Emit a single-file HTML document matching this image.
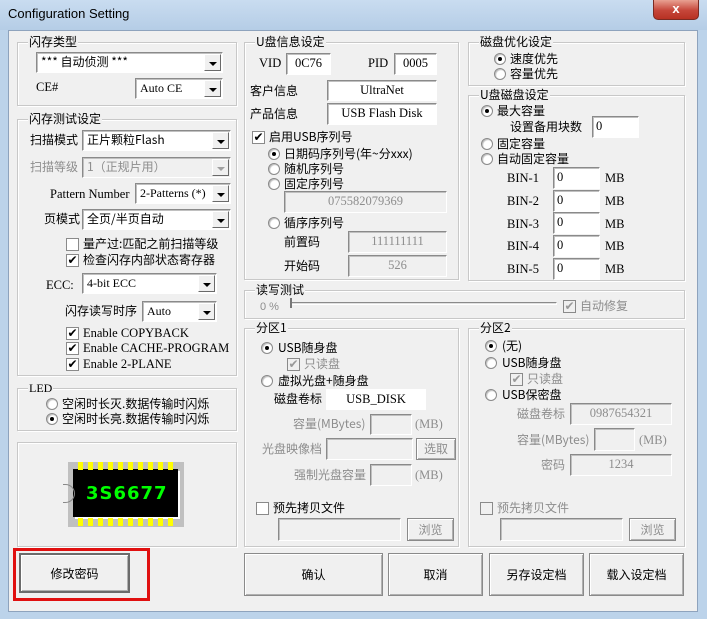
<!DOCTYPE html>
<html><head><meta charset="utf-8">
<style>
*{margin:0;padding:0;box-sizing:border-box}
body{width:707px;height:619px;overflow:hidden;background:#bcd3ea;font-family:"Liberation Serif","Noto Sans CJK SC",serif;font-size:12px;color:#000;position:relative}
div,span{position:absolute}
.t{line-height:16px;white-space:nowrap;font-family:"Liberation Serif","Noto Sans CJK SC",serif;font-size:12.5px}
.c{font-family:"Noto Sans CJK SC","Liberation Sans",sans-serif;font-size:12px}
.g{color:#8d8d8d}
.grp{border:1px solid #c8c8c8;box-shadow:inset 1px 1px 0 #fff,1px 1px 0 #fff}
.lb{background:#f0f0f0;padding:0 1px;line-height:14px;top:-8px;left:10px}
.ed{background:#fff;border:1px solid;border-color:#8a8a8a #fff #fff #8a8a8a;box-shadow:inset 1px 1px 0 #c0c0c0;text-align:center;line-height:18px;font-size:12.5px;font-family:"Liberation Serif",serif}
.dis{background:#f0f0f0;color:#8d8d8d}
.cb{background:#fff;border:1px solid;border-color:#8a8a8a #fff #fff #8a8a8a;box-shadow:inset 1px 1px 0 #c0c0c0;line-height:18px;padding-left:4px;white-space:nowrap}
.ar{right:1px;top:1px;bottom:1px;width:17px;background:#f0f0f0;border:1px solid;border-color:#fff #6a6a6a #6a6a6a #fff}
.ar:after{content:"";position:absolute;left:4px;top:7px;border-left:4px solid transparent;border-right:4px solid transparent;border-top:4px solid #000}
.ard:after{border-top-color:#a0a0a0}
.rb{width:12px;height:12px;border-radius:50%;background:#fff;border:1px solid #8a8a8a;box-shadow:inset 1px 1px 1px #bbb}
.rb.on:after{content:"";position:absolute;left:3px;top:3px;width:4px;height:4px;border-radius:50%;background:#000}
.ck{width:13px;height:13px;background:#fff;border:1px solid #8a8a8a;font-size:12px;line-height:11px;text-align:center;font-family:"DejaVu Sans",sans-serif}
.ckd{background:#f0f0f0;color:#999}
.btn{background:#f0f0f0;border:1px solid #8a8a8a;box-shadow:inset 1px 1px 0 #fff,inset -1px -1px 0 #b0b0b0;text-align:center;font-family:"Noto Sans CJK SC",sans-serif;font-size:12px}
</style></head><body>
<div style="left:0;top:0;width:707px;height:30px;background:linear-gradient(#c9dcf0,#b5cde6)"></div>
<div class="t" style="left:8px;top:6px;font-family:'Liberation Sans',sans-serif;font-size:13px">Configuration Setting</div>
<div style="left:653px;top:0;width:46px;height:20px;background:linear-gradient(#e8a192,#c6463a 55%,#b73123);border:1px solid #7b2a22;border-top:none;border-radius:0 0 5px 5px;color:#fff;text-align:center;font:bold 13px/18px 'Liberation Sans',sans-serif">x</div>
<div style="left:8px;top:30px;width:690px;height:582px;background:#f0f0f0;border:1px solid #8ea3bd"></div>

<div class="grp" style="left:17px;top:42px;width:220px;height:64px"><span class="lb c">闪存类型</span></div>
<div class="cb c" style="left:36px;top:52px;width:187px;height:21px">*** 自动侦测 ***<span class="ar"></span></div>
<div class="t" style="left:36px;top:79px">CE#</div>
<div class="cb" style="left:135px;top:78px;width:88px;height:21px">Auto CE<span class="ar"></span></div>

<div class="grp" style="left:17px;top:119px;width:220px;height:257px"><span class="lb c">闪存测试设定</span></div>
<div class="t c" style="left:30px;top:132px">扫描模式</div>
<div class="cb c" style="left:82px;top:130px;width:149px;height:21px">正片颗粒Flash<span class="ar"></span></div>
<div class="t c g" style="left:30px;top:159px">扫描等级</div>
<div class="cb c g" style="left:82px;top:157px;width:149px;height:21px;background:#f0f0f0">1（正规片用）<span class="ar ard"></span></div>
<div class="t" style="left:50px;top:186px">Pattern Number</div>
<div class="cb" style="left:135px;top:183px;width:96px;height:21px">2-Patterns (*)<span class="ar"></span></div>
<div class="t c" style="left:44px;top:211px">页模式</div>
<div class="cb c" style="left:82px;top:209px;width:149px;height:21px">全页/半页自动<span class="ar"></span></div>
<div class="ck" style="left:66px;top:238px"></div><div class="t c" style="left:83px;top:236px">量产过:匹配之前扫描等级</div>
<div class="ck" style="left:66px;top:254px">✔</div><div class="t c" style="left:83px;top:252px">检查闪存内部状态寄存器</div>
<div class="t" style="left:46px;top:277px">ECC:</div>
<div class="cb" style="left:82px;top:273px;width:135px;height:21px">4-bit ECC<span class="ar"></span></div>
<div class="t c" style="left:65px;top:303px">闪存读写时序</div>
<div class="cb" style="left:142px;top:301px;width:75px;height:21px">Auto<span class="ar"></span></div>
<div class="ck" style="left:66px;top:327px">✔</div><div class="t" style="left:83px;top:325px">Enable COPYBACK</div>
<div class="ck" style="left:66px;top:342px">✔</div><div class="t" style="left:83px;top:340px">Enable CACHE-PROGRAM</div>
<div class="ck" style="left:66px;top:358px">✔</div><div class="t" style="left:83px;top:356px">Enable 2-PLANE</div>

<div class="grp" style="left:17px;top:388px;width:220px;height:43px"><span class="lb">LED</span></div>
<div class="rb" style="left:46px;top:398px"></div><div class="t c" style="left:62px;top:396px">空闲时长灭.数据传输时闪烁</div>
<div class="rb on" style="left:46px;top:413px"></div><div class="t c" style="left:62px;top:411px">空闲时长亮.数据传输时闪烁</div>

<div class="grp" style="left:17px;top:442px;width:220px;height:105px"></div>
<div style="left:68px;top:462px;width:116px;height:65px;background:#c0c0c0"></div>
<div style="left:73px;top:469px;width:105px;height:48px;background:#000;box-shadow:2px 2px 0 #fff"></div>
<div style="left:78px;top:462px;width:95px;height:8px;background:repeating-linear-gradient(90deg,#ff0 0 5px,transparent 5px 10px)"></div>
<div style="left:78px;top:518px;width:95px;height:8px;background:repeating-linear-gradient(90deg,#ff0 0 5px,transparent 5px 10px)"></div>
<div style="left:63px;top:484px;width:12px;height:19px;border:1px solid #888;border-radius:0 10px 10px 0;border-left:none"></div>
<div style="left:86px;top:483px;color:#00ff00;font:bold 18px/22px 'DejaVu Sans',sans-serif;letter-spacing:1px">3S6677</div>

<div style="left:13px;top:548px;width:137px;height:53px;border:3px solid #e01010"></div>
<div class="btn" style="left:19px;top:553px;width:111px;height:40px;line-height:38px;border:2px solid #6b6b6b">修改密码</div>

<div class="grp" style="left:244px;top:42px;width:215px;height:238px"><span class="lb c">U盘信息设定</span></div>
<div class="t" style="left:259px;top:55px">VID</div>
<div class="ed" style="left:286px;top:53px;width:45px;height:22px">0C76</div>
<div class="t" style="left:368px;top:55px">PID</div>
<div class="ed" style="left:394px;top:53px;width:43px;height:22px">0005</div>
<div class="t c" style="left:250px;top:83px">客户信息</div>
<div class="ed" style="left:327px;top:80px;width:110px;height:21px">UltraNet</div>
<div class="t c" style="left:250px;top:106px">产品信息</div>
<div class="ed" style="left:327px;top:103px;width:110px;height:22px">USB Flash Disk</div>
<div class="ck" style="left:252px;top:131px">✔</div><div class="t c" style="left:269px;top:129px">启用USB序列号</div>
<div class="rb on" style="left:268px;top:148px"></div><div class="t c" style="left:284px;top:146px">日期码序列号(年~分xxx)</div>
<div class="rb" style="left:268px;top:163px"></div><div class="t c" style="left:284px;top:161px">随机序列号</div>
<div class="rb" style="left:268px;top:178px"></div><div class="t c" style="left:284px;top:176px">固定序列号</div>
<div class="ed dis" style="left:284px;top:191px;width:163px;height:22px">075582079369</div>
<div class="rb" style="left:268px;top:217px"></div><div class="t c" style="left:284px;top:215px">循序序列号</div>
<div class="t c" style="left:284px;top:234px">前置码</div>
<div class="ed dis" style="left:348px;top:231px;width:99px;height:22px">111111111</div>
<div class="t c" style="left:284px;top:258px">开始码</div>
<div class="ed dis" style="left:348px;top:255px;width:99px;height:22px">526</div>

<div class="grp" style="left:468px;top:42px;width:217px;height:44px"><span class="lb c">磁盘优化设定</span></div>
<div class="rb on" style="left:494px;top:53px"></div><div class="t c" style="left:510px;top:51px">速度优先</div>
<div class="rb" style="left:494px;top:68px"></div><div class="t c" style="left:510px;top:66px">容量优先</div>

<div class="grp" style="left:468px;top:95px;width:217px;height:186px"><span class="lb c">U盘磁盘设定</span></div>
<div class="rb on" style="left:481px;top:105px"></div><div class="t c" style="left:497px;top:103px">最大容量</div>
<div class="t c" style="left:510px;top:119px">设置备用块数</div>
<div class="ed" style="left:592px;top:116px;width:47px;height:22px;text-align:left;padding-left:3px">0</div>
<div class="rb" style="left:481px;top:138px"></div><div class="t c" style="left:497px;top:136px">固定容量</div>
<div class="rb" style="left:481px;top:153px"></div><div class="t c" style="left:497px;top:151px">自动固定容量</div>
<div class="t" style="left:507px;top:170px">BIN-1</div><div class="ed" style="left:553px;top:167px;width:47px;height:22px;text-align:left;padding-left:3px">0</div><div class="t" style="left:605px;top:170px">MB</div>
<div class="t" style="left:507px;top:193px">BIN-2</div><div class="ed" style="left:553px;top:190px;width:47px;height:22px;text-align:left;padding-left:3px">0</div><div class="t" style="left:605px;top:193px">MB</div>
<div class="t" style="left:507px;top:216px">BIN-3</div><div class="ed" style="left:553px;top:212px;width:47px;height:22px;text-align:left;padding-left:3px">0</div><div class="t" style="left:605px;top:216px">MB</div>
<div class="t" style="left:507px;top:238px">BIN-4</div><div class="ed" style="left:553px;top:235px;width:47px;height:22px;text-align:left;padding-left:3px">0</div><div class="t" style="left:605px;top:238px">MB</div>
<div class="t" style="left:507px;top:261px">BIN-5</div><div class="ed" style="left:553px;top:258px;width:47px;height:22px;text-align:left;padding-left:3px">0</div><div class="t" style="left:605px;top:261px">MB</div>

<div class="grp" style="left:244px;top:290px;width:441px;height:29px"><span class="lb c">读写测试</span></div>
<div class="t g" style="left:260px;top:299px;font-family:'Liberation Sans',sans-serif;font-size:11px">0 %</div>
<div style="left:290px;top:302px;width:267px;height:3px;border:1px solid;border-color:#8a8a8a #fff #fff #8a8a8a;background:#e0e0e0"></div>
<div style="left:290px;top:298px;width:2px;height:10px;background:#777"></div>
<div class="ck ckd" style="left:563px;top:300px">✔</div><div class="t c g" style="left:580px;top:298px">自动修复</div>

<div class="grp" style="left:244px;top:328px;width:215px;height:219px"><span class="lb c">分区1</span></div>
<div class="rb on" style="left:261px;top:342px"></div><div class="t c" style="left:278px;top:340px">USB随身盘</div>
<div class="ck ckd" style="left:287px;top:358px">✔</div><div class="t c g" style="left:304px;top:356px">只读盘</div>
<div class="rb" style="left:261px;top:375px"></div><div class="t c" style="left:278px;top:373px">虚拟光盘+随身盘</div>
<div class="t c" style="left:274px;top:391px">磁盘卷标</div>
<div class="ed" style="left:326px;top:389px;width:100px;height:21px;border-color:#fff;box-shadow:none">USB_DISK</div>
<div class="t c g" style="left:293px;top:416px">容量(MBytes)</div>
<div class="ed dis" style="left:370px;top:414px;width:42px;height:21px"></div>
<div class="t g" style="left:415px;top:416px">(MB)</div>
<div class="t c g" style="left:262px;top:441px">光盘映像档</div>
<div class="ed dis" style="left:326px;top:438px;width:87px;height:22px"></div>
<div class="btn g" style="left:416px;top:438px;width:40px;height:22px;line-height:20px">选取</div>
<div class="t c g" style="left:294px;top:467px">强制光盘容量</div>
<div class="ed dis" style="left:370px;top:464px;width:42px;height:22px"></div>
<div class="t g" style="left:415px;top:467px">(MB)</div>
<div class="ck" style="left:256px;top:502px"></div><div class="t c" style="left:273px;top:500px">预先拷贝文件</div>
<div class="ed dis" style="left:278px;top:518px;width:123px;height:23px"></div>
<div class="btn g" style="left:407px;top:518px;width:47px;height:23px;line-height:21px">浏览</div>

<div class="grp" style="left:468px;top:328px;width:217px;height:219px"><span class="lb c">分区2</span></div>
<div class="rb on" style="left:485px;top:340px"></div><div class="t c" style="left:502px;top:338px">(无)</div>
<div class="rb" style="left:485px;top:357px"></div><div class="t c" style="left:502px;top:355px">USB随身盘</div>
<div class="ck ckd" style="left:510px;top:373px">✔</div><div class="t c g" style="left:527px;top:371px">只读盘</div>
<div class="rb" style="left:485px;top:389px"></div><div class="t c" style="left:502px;top:387px">USB保密盘</div>
<div class="t c g" style="left:517px;top:406px">磁盘卷标</div>
<div class="ed dis" style="left:570px;top:403px;width:102px;height:22px">0987654321</div>
<div class="t c g" style="left:517px;top:432px">容量(MBytes)</div>
<div class="ed dis" style="left:594px;top:428px;width:41px;height:23px"></div>
<div class="t g" style="left:639px;top:432px">(MB)</div>
<div class="t c g" style="left:541px;top:457px">密码</div>
<div class="ed dis" style="left:570px;top:454px;width:102px;height:22px">1234</div>
<div class="ck ckd" style="left:480px;top:502px"></div><div class="t c g" style="left:497px;top:500px">预先拷贝文件</div>
<div class="ed dis" style="left:500px;top:518px;width:123px;height:23px"></div>
<div class="btn g" style="left:629px;top:518px;width:47px;height:23px;line-height:21px">浏览</div>

<div class="btn" style="left:244px;top:553px;width:139px;height:43px;line-height:41px">确认</div>
<div class="btn" style="left:388px;top:553px;width:95px;height:43px;line-height:41px">取消</div>
<div class="btn" style="left:489px;top:553px;width:95px;height:43px;line-height:41px">另存设定档</div>
<div class="btn" style="left:589px;top:553px;width:95px;height:43px;line-height:41px">载入设定档</div>
</body></html>
